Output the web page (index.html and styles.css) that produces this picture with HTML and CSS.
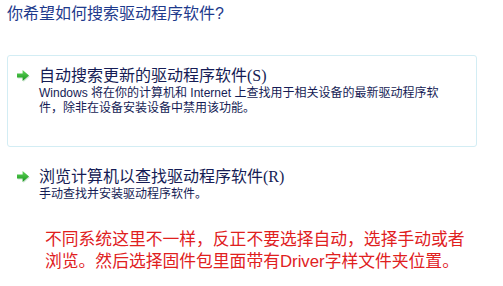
FILE: index.html
```html
<!DOCTYPE html>
<html lang="zh-CN">
<head>
<meta charset="utf-8">
<link rel="stylesheet" href="styles.css">
</head>
<body>
<div class="page">
  <div class="instruction">你希望如何搜索驱动程序软件?</div>
  <div class="option option-hover">
    <svg class="arrow" width="15" height="14" viewBox="0 0 15 14">
      <defs>
        <linearGradient id="g1" x1="0" y1="0" x2="0" y2="1">
          <stop offset="0" stop-color="#62d65c"/>
          <stop offset="1" stop-color="#17951b"/>
        </linearGradient>
      </defs>
      <path d="M1 4.6 H6.6 V1 L13 6.5 L6.6 12 V8.4 H1 Z" fill="#a9cdb2" opacity="0.55" transform="translate(0.8 1)"/>
      <path d="M1 4.6 H6.6 V1 L13 6.5 L6.6 12 V8.4 H1 Z" fill="url(#g1)"/>
    </svg>
    <div class="option-text">
      <div class="option-title">自动搜索更新的驱动程序软件<span class="key">(S)</span></div>
      <div class="option-desc">Windows 将在你的计算机和 Internet 上查找用于相关设备的最新驱动程序软<br>件，除非在设备安装设备中禁用该功能。</div>
    </div>
  </div>
  <div class="option option-plain">
    <svg class="arrow" width="15" height="14" viewBox="0 0 15 14">
      <defs>
        <linearGradient id="g2" x1="0" y1="0" x2="0" y2="1">
          <stop offset="0" stop-color="#62d65c"/>
          <stop offset="1" stop-color="#17951b"/>
        </linearGradient>
      </defs>
      <path d="M1 4.6 H6.6 V1 L13 6.5 L6.6 12 V8.4 H1 Z" fill="#a9cdb2" opacity="0.55" transform="translate(0.8 1)"/>
      <path d="M1 4.6 H6.6 V1 L13 6.5 L6.6 12 V8.4 H1 Z" fill="url(#g2)"/>
    </svg>
    <div class="option-text">
      <div class="option-title">浏览计算机以查找驱动程序软件<span class="key">(R)</span></div>
      <div class="option-desc">手动查找并安装驱动程序软件。</div>
    </div>
  </div>
  <div class="note">不同系统这里不一样，反正不要选择自动，选择手动或者<br>浏览。然后选择固件包里面带有Driver字样文件夹位置。</div>
</div>
</body>
</html>
```

FILE: styles.css
```css
html, body {
  margin: 0;
  padding: 0;
  background: #ffffff;
}
.page {
  width: 503px;
  height: 286px;
  overflow: hidden;
  font-family: "Liberation Sans", "Noto Sans CJK SC", sans-serif;
  display: flex;
  flex-direction: column;
}
.instruction {
  margin: 4px 0 0 7px;
  font-size: 16px;
  line-height: 20px;
  color: #1e3a8c;
}
.option {
  display: flex;
  align-items: flex-start;
  margin-left: 7px;
  width: 470px;
  box-sizing: border-box;
  color: #151c55;
}
.option-hover {
  margin-top: 31px;
  height: 92px;
  border: 1px solid #d3edf4;
  border-radius: 3px;
  padding: 10px 0 0 8px;
}
.option-plain {
  margin-top: 9px;
  border: 1px solid transparent;
  padding: 10px 0 0 8px;
}
.arrow {
  flex: none;
  margin-top: 3px;
}
.option-text {
  margin-left: 8px;
}
.option-title {
  font-size: 16px;
  line-height: 20px;
}
.key {
  font-family: "Liberation Serif", serif;
}
.option-desc {
  font-size: 12px;
  line-height: 15px;
}
.note {
  margin: 26px 0 0 45px;
  font-size: 16.8px;
  line-height: 22px;
  color: #e0201e;
}
```
